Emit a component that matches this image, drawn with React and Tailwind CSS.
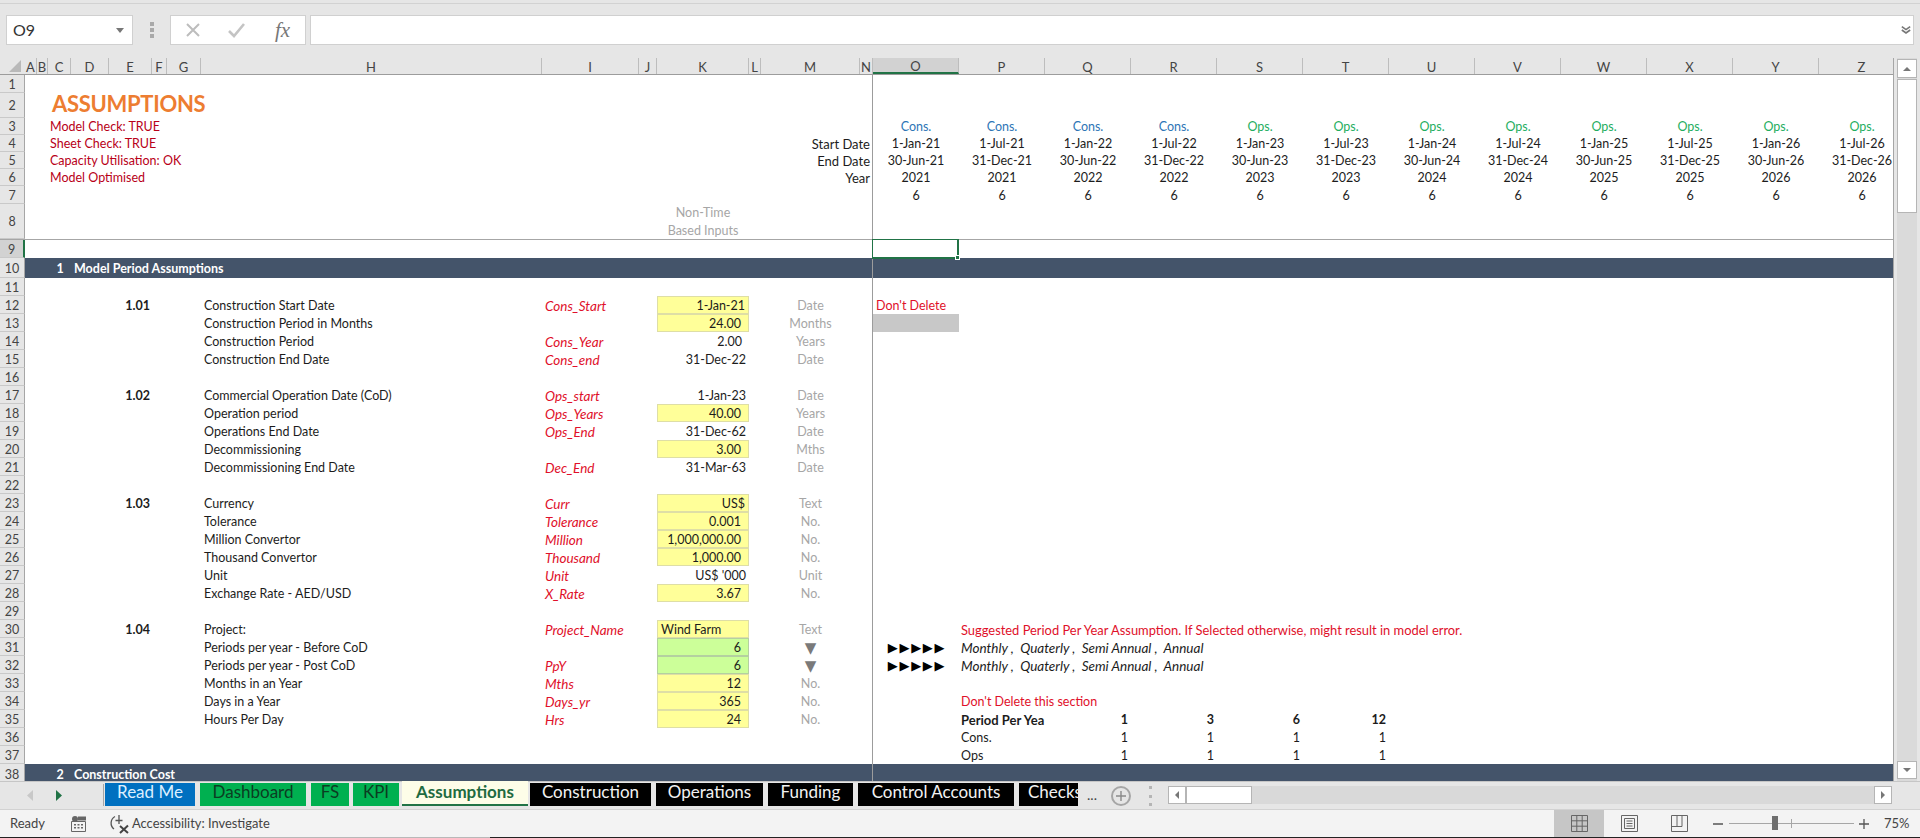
const GRID =
  "grid grid-rows-1 grid-cols-[25px_12px_11px_23px_38px_43px_15px_34px_341px_97px_18px_92px_12px_99px_13px_repeat(12,86px)]";

// column start classes, O is the first column right of the freeze line
const COL = {
  C: "col-start-4",
  D: "col-start-5",
  E: "col-start-6",
  H: "col-start-9",
  I: "col-start-10",
  K: "col-start-12",
  M: "col-start-14",
  N: "col-start-15",
  O: "col-start-16",
  P: "col-start-17",
  Q: "col-start-18",
  R: "col-start-19",
  S: "col-start-20",
  T: "col-start-21",
  U: "col-start-22",
  V: "col-start-23",
  W: "col-start-24",
  X: "col-start-25",
  Y: "col-start-26",
  Z: "col-start-27",
};

const LETTERS = "ABCDEFGHIJKLMNOPQRSTUVWXYZ".split("");

const PERIODS = [
  ["O", "Cons.", "1-Jan-21", "30-Jun-21", "2021"],
  ["P", "Cons.", "1-Jul-21", "31-Dec-21", "2021"],
  ["Q", "Cons.", "1-Jan-22", "30-Jun-22", "2022"],
  ["R", "Cons.", "1-Jul-22", "31-Dec-22", "2022"],
  ["S", "Ops.", "1-Jan-23", "30-Jun-23", "2023"],
  ["T", "Ops.", "1-Jul-23", "31-Dec-23", "2023"],
  ["U", "Ops.", "1-Jan-24", "30-Jun-24", "2024"],
  ["V", "Ops.", "1-Jul-24", "31-Dec-24", "2024"],
  ["W", "Ops.", "1-Jan-25", "30-Jun-25", "2025"],
  ["X", "Ops.", "1-Jul-25", "31-Dec-25", "2025"],
  ["Y", "Ops.", "1-Jan-26", "30-Jun-26", "2026"],
  ["Z", "Ops.", "1-Jul-26", "31-Dec-26", "2026"],
];

const INPUTS = {
  12: { ref: "1.01", label: "Construction Start Date", name: "Cons_Start", value: "1-Jan-21", fill: "y", unit: "Date" },
  13: { label: "Construction Period in Months", value: "24.00", pad: true, fill: "y", unit: "Months" },
  14: { label: "Construction Period", name: "Cons_Year", value: "2.00", pad: true, unit: "Years" },
  15: { label: "Construction End Date", name: "Cons_end", value: "31-Dec-22", unit: "Date" },
  17: { ref: "1.02", label: "Commercial Operation Date (CoD)", name: "Ops_start", value: "1-Jan-23", unit: "Date" },
  18: { label: "Operation period", name: "Ops_Years", value: "40.00", pad: true, fill: "y", unit: "Years" },
  19: { label: "Operations End Date", name: "Ops_End", value: "31-Dec-62", unit: "Date" },
  20: { label: "Decommissioning", value: "3.00", pad: true, fill: "y", unit: "Mths" },
  21: { label: "Decommissioning End Date", name: "Dec_End", value: "31-Mar-63", unit: "Date" },
  23: { ref: "1.03", label: "Currency", name: "Curr", value: "US$", fill: "y", unit: "Text" },
  24: { label: "Tolerance", name: "Tolerance", value: "0.001", pad: true, fill: "y", unit: "No." },
  25: { label: "Million Convertor", name: "Million", value: "1,000,000.00", pad: true, fill: "y", unit: "No." },
  26: { label: "Thousand Convertor", name: "Thousand", value: "1,000.00", pad: true, fill: "y", unit: "No." },
  27: { label: "Unit", name: "Unit", value: "US$ '000", unit: "Unit" },
  28: { label: "Exchange Rate - AED/USD", name: "X_Rate", value: "3.67", pad: true, fill: "y", unit: "No." },
  30: { ref: "1.04", label: "Project:", name: "Project_Name", value: "Wind Farm", left: true, fill: "y", unit: "Text" },
  31: { label: "Periods per year - Before CoD", value: "6", pad: true, fill: "g", unit: "▼" },
  32: { label: "Periods per year - Post CoD", name: "PpY", value: "6", pad: true, fill: "g", unit: "▼" },
  33: { label: "Months in an Year", name: "Mths", value: "12", pad: true, fill: "y", unit: "No." },
  34: { label: "Days in a Year", name: "Days_yr", value: "365", pad: true, fill: "y", unit: "No." },
  35: { label: "Hours Per Day", name: "Hrs", value: "24", pad: true, fill: "y", unit: "No." },
};

const TABS = [
  { name: "Read Me", cls: "w-[90px] mr-[5px] justify-center bg-[#0070c0] text-[#dcefff]" },
  { name: "Dashboard", cls: "w-[106px] mr-[5px] justify-center bg-[#00b050] text-[#0b3d22]" },
  { name: "FS", cls: "w-[38px] mr-[4px] justify-center bg-[#00b050] text-[#0b3d22]" },
  { name: "KPI", cls: "w-[46px] mr-[3px] justify-center bg-[#00b050] text-[#0b3d22]" },
  { name: "Assumptions", cls: "w-[126px] mr-[2px] h-[25px] -mt-[2px] pt-[2px] justify-center bg-[#fdfde8] border-b-2 border-[#217346] text-[#1f6b41] font-bold" },
  { name: "Construction", cls: "w-[121px] mr-[5px] justify-center bg-black text-[#f2f2f2]" },
  { name: "Operations", cls: "w-[107px] mr-[5px] justify-center bg-black text-[#f2f2f2]" },
  { name: "Funding", cls: "w-[85px] mr-[5px] justify-center bg-black text-[#f2f2f2]" },
  { name: "Control Accounts", cls: "w-[156px] mr-[5px] justify-center bg-black text-[#f2f2f2]" },
  { name: "Checks", cls: "w-[59px] pl-[9px] bg-black text-[#f2f2f2] overflow-hidden" },
];

function Cell({ col, className = "", children }) {
  // excel sits text low in the row, so nudge it unless the cell sets its own offset
  const nudge = className.includes("pt-[") ? "" : "pt-[1px]";
  return (
    <div className={`${COL[col]} row-start-1 flex items-center whitespace-pre min-w-0 h-full ${nudge} ${className}`}>
      {children}
    </div>
  );
}

function Row({ n, h = "h-[18px]", selected, className = "", children }) {
  return (
    <div className={`${GRID} ${h} shrink-0 text-[12.5px] leading-[16px] text-[#1c1c1c] ${className}`}>
      <div
        className={`col-start-1 row-start-1 flex items-center justify-center h-full border-b border-b-[#c9c9c9] border-r text-[12.5px] font-normal text-[#444] pt-[2px] ${
          selected ? "bg-[#d2d2d2] border-r-2 border-r-[#217346]" : "bg-[#e6e6e6] border-r-[#a6a6a6]"
        }`}
      >
        {n}
      </div>
      {children}
    </div>
  );
}

function InputRow({ n, extra }) {
  const r = INPUTS[n];
  if (!r) return <Row n={n}>{extra}</Row>;
  const fill =
    r.fill === "y"
      ? "bg-[#ffff99] border border-[#dedea6]"
      : r.fill === "g"
        ? "bg-[#ccff99] border border-[#b4d0a0]"
        : "";
  return (
    <Row n={n}>
      {r.ref && <Cell col="E" className="justify-end pr-[2px] font-bold">{r.ref}</Cell>}
      <Cell col="H" className="pl-[3px]">{r.label}</Cell>
      {r.name && <Cell col="I" className="pl-[3px] italic text-[13.5px] text-[#e0102a]">{r.name}</Cell>}
      <Cell
        col="K"
        className={`${fill} ${r.left ? "pl-[3px]" : r.pad ? "justify-end pr-[7px]" : "justify-end pr-[3px]"}`}
      >
        {r.value}
      </Cell>
      <Cell
        col="M"
        className={`justify-center ${r.unit === "▼" ? "font-[family-name:DejaVu_Sans,sans-serif] text-[#7a7a7a] text-[15px]" : "text-[#a6a6a6]"}`}
      >
        {r.unit}
      </Cell>
      {extra}
    </Row>
  );
}

const SCHEDULE = ["Q", "R", "S", "T"];

const arrows = (
  <Cell col="O" className="justify-center pl-[2px] font-[family-name:DejaVu_Sans,sans-serif] text-[13px] text-black tracking-[1.7px]">▶▶▶▶▶</Cell>
);
const periodHint = (
  <Cell col="P" className="pl-[2px] italic text-[13.5px]">Monthly ,  Quaterly ,  Semi Annual ,  Annual</Cell>
);

const EXTRAS = {
  12: <Cell col="O" className="pl-[3px] text-[#e0102a]">Don't Delete</Cell>,
  13: <Cell col="O" className="bg-[#c8c8c8]" />,
  30: <Cell col="P" className="pl-[2px] text-[12.9px] text-[#e0102a]">Suggested Period Per Year Assumption. If Selected otherwise, might result in model error.</Cell>,
  31: <>{arrows}{periodHint}</>,
  32: <>{arrows}{periodHint}</>,
  34: <Cell col="P" className="pl-[2px] text-[#e0102a]">Don't Delete this section</Cell>,
  35: (
    <>
      <Cell col="P" className="pl-[2px] text-[13px] font-bold overflow-hidden">Period Per Yea</Cell>
      {["1", "3", "6", "12"].map((v, i) => (
        <Cell key={v} col={SCHEDULE[i]} className="justify-end pr-[3px] font-bold">{v}</Cell>
      ))}
    </>
  ),
  36: (
    <>
      <Cell col="P" className="pl-[2px]">Cons.</Cell>
      {SCHEDULE.map((c) => <Cell key={c} col={c} className="justify-end pr-[3px]">1</Cell>)}
    </>
  ),
  37: (
    <>
      <Cell col="P" className="pl-[2px]">Ops</Cell>
      {SCHEDULE.map((c) => <Cell key={c} col={c} className="justify-end pr-[3px]">1</Cell>)}
    </>
  ),
};

function Sheet() {
  const body = [];
  for (let n = 11; n <= 37; n++) body.push(<InputRow key={n} n={n} extra={EXTRAS[n]} />);

  return (
    <div className="relative w-[1894px] h-full overflow-hidden bg-white border-r border-r-[#a6a6a6]">
      {/* column letters */}
      <div className={`${GRID} h-[17px] bg-[#e6e6e6] border-b border-b-[#9c9c9c] text-[13px] leading-[16px] text-[#444]`}>
        <div className="flex items-center justify-end pr-[3px]">
          <svg width="13" height="12" viewBox="0 0 13 12"><path d="M12 0v12H0z" fill="#b9b9b9" /></svg>
        </div>
        {LETTERS.map((c) => (
          <div
            key={c}
            className={`flex items-center justify-center pt-[1px] border-r border-r-[#bdbdbd] ${c === "O" ? "bg-[#d2d2d2] border-b-2 border-b-[#217346]" : ""}`}
          >
            {c}
          </div>
        ))}
      </div>

      <Row n={1} />
      <Row n={2} h="h-[25px]">
        <Cell col="C" className="pl-[4px] pb-[3px] pt-[0px] text-[22px] leading-[22px] font-bold text-[#ed7d31] tracking-[-0.3px]">ASSUMPTIONS</Cell>
      </Row>
      {[
        [3, "Model Check: TRUE", "h-[17px]"],
        [4, "Sheet Check: TRUE", "h-[17px]", "Start Date", 2],
        [5, "Capacity Utilisation: OK", "h-[17px]", "End Date", 3],
        [6, "Model Optimised", "h-[17px]", "Year", 4],
      ].map(([n, text, h, side, idx]) => (
        <Row key={n} n={n} h={h}>
          <Cell col="C" className="pl-[2px] text-[#b80018]">{text}</Cell>
          {side && <Cell col="N" className="justify-end pr-[3px] text-[13px]">{side}</Cell>}
          {PERIODS.map((p) => (
            <Cell
              key={p[0]}
              col={p[0]}
              className={`justify-center ${n === 3 ? (p[1] === "Cons." ? "text-[#2e75b6]" : "text-[#1fae5f]") : ""}`}
            >
              {n === 3 ? p[1] : p[idx]}
            </Cell>
          ))}
        </Row>
      ))}
      <Row n={7}>
        {PERIODS.map((p) => <Cell key={p[0]} col={p[0]} className="justify-center">6</Cell>)}
      </Row>
      <Row n={8} h="h-[36px]" className="border-b border-b-[#a6a6a6]">
        <Cell col="K" className="flex-col justify-center leading-[18px] text-[#a6a6a6]">
          <span>Non-Time</span>
          <span>Based Inputs</span>
        </Cell>
      </Row>
      <Row n={9} selected />
      <Row n={10} h="h-[20px]" className="bg-[#44546a] text-white font-bold">
        <Cell col="C" className="justify-center pl-[1px] pt-[2px]">1</Cell>
        <Cell col="D" className="pl-[3px] pt-[2px]">Model Period Assumptions</Cell>
      </Row>
      {body}
      <Row n={38} h="h-[20px]" className="bg-[#44546a] text-white font-bold">
        <Cell col="C" className="justify-center pl-[1px] pt-[2px]">2</Cell>
        <Cell col="D" className="pl-[3px] pt-[2px]">Construction Cost</Cell>
      </Row>

      {/* frozen pane divider and active cell outline */}
      <div className="absolute left-[872px] top-[17px] bottom-0 w-px bg-[#9c9c9c]" />
      <div className="absolute left-[872px] top-[181px] w-[87px] h-[20px] border border-[#217346] border-r-2 border-b-2">
        <div className="absolute -right-[3px] -bottom-[3px] w-[5px] h-[5px] bg-[#217346] border border-white" />
      </div>
    </div>
  );
}

function ScrollBtn({ d, className = "" }) {
  return (
    <div className={`flex items-center justify-center shrink-0 bg-white border border-[#b5b5b5] ${className}`}>
      <svg width="10" height="10" viewBox="0 0 10 10"><path d={d} fill="#777" /></svg>
    </div>
  );
}

function StatusIcons() {
  return (
    <>
      <div className="flex items-center justify-center w-[50px] h-full bg-[#c6c6c6]">
        <svg width="17" height="17" viewBox="0 0 17 17" fill="none" stroke="#666">
          <path d="M.5.5h16v16H.5zM.5 5.800h16M.5 11.200h16M5.800.5v16M11.200.5v16" />
        </svg>
      </div>
      <div className="flex items-center justify-center w-[50px] h-full">
        <svg width="17" height="17" viewBox="0 0 17 17" fill="none" stroke="#666">
          <path d="M.5.5h16v16H.5zM3.500 3.500h10v10h-10zM5.500 6h6M5.500 8.500h6M5.500 11h6" />
        </svg>
      </div>
      <div className="flex items-center justify-center w-[50px] h-full">
        <svg width="17" height="17" viewBox="0 0 17 17" fill="none" stroke="#666">
          <path d="M.5.5h16v16H.5zM.5 11.500h10.500V.5M6 .5v11" />
        </svg>
      </div>
    </>
  );
}

export default function App() {
  return (
    <div className="w-[1920px] h-[838px] flex flex-col overflow-hidden bg-[#e6e6e6] font-[family-name:Lato,sans-serif]">
      {/* formula bar */}
      <div className="h-[58px] shrink-0 pt-[3px]">
        <div className="border-t border-t-[#d2d2d2] flex items-start pt-[11px] pl-[6px] pr-[6px] h-full">
          <div className="w-[127px] h-[30px] bg-white border border-[#d0d0d0] flex items-center justify-between pl-[6px] pr-[8px] text-[16px] text-[#333]">
            <span>O9</span>
            <svg width="8" height="5" viewBox="0 0 8 5"><path d="M0 0h8L4 5z" fill="#777" /></svg>
          </div>
          <div className="w-[37px] h-[30px] flex flex-col items-center justify-center gap-[2px]">
            <span className="w-[4px] h-[4px] bg-[#a9a9a9]" />
            <span className="w-[4px] h-[4px] bg-[#a9a9a9]" />
            <span className="w-[4px] h-[4px] bg-[#a9a9a9]" />
          </div>
          <div className="w-[136px] h-[30px] bg-white border border-[#d0d0d0] flex items-center pl-[14px] mr-[4px]">
            <svg width="16" height="16" viewBox="0 0 16 16" fill="none" stroke="#bdbdbd" strokeWidth="2">
              <path d="M2 2l12 12M14 2L2 14" />
            </svg>
            <svg className="ml-[27px]" width="17" height="15" viewBox="0 0 17 15" fill="none" stroke="#c4c4c4" strokeWidth="2.600">
              <path d="M1 8l5 5L16 1" />
            </svg>
            <span className="ml-[30px] font-[family-name:Liberation_Serif,serif] italic text-[21px] leading-none text-[#777]">fx</span>
          </div>
          <div className="flex-1 h-[30px] bg-white border border-[#d0d0d0] flex items-center justify-end pr-[2px]">
            <svg width="10" height="10" viewBox="0 0 12 10" fill="none" stroke="#777" strokeWidth="2">
              <path d="M1 1l5 3.500L11 1M1 5l5 3.500L11 5" />
            </svg>
          </div>
        </div>
      </div>

      {/* sheet and vertical scrollbar */}
      <div className="h-[723px] shrink-0 flex">
        <Sheet />
        <div className="ml-[3px] w-[20px] flex flex-col pt-[1px] bg-[#dadada]">
          <ScrollBtn d="M5 3l4 4H1z" className="h-[19px]" />
          <div className="h-[134px] mt-[1px] shrink-0 bg-white border border-[#b5b5b5]" />
          <div className="flex-1" />
          <ScrollBtn d="M5 7L1 3h8z" className="h-[18px] mb-[2px]" />
        </div>
      </div>

      {/* sheet tabs */}
      <div className="h-[28px] shrink-0 flex items-start bg-[#e6e6e6] border-t border-t-[#c6c6c6] pt-[1px]">
        <div className="w-[105px] h-[24px] shrink-0 flex items-center">
          <svg className="ml-[27px]" width="7" height="11" viewBox="0 0 7 11"><path d="M6 0v11L0 5.500z" fill="#c8c8c8" /></svg>
          <svg className="ml-[21px]" width="7" height="11" viewBox="0 0 7 11"><path d="M1 0v11l6-5.500z" fill="#217346" /></svg>
          <span className="ml-[41px] w-px h-[22px] bg-[#a6a6a6]" />
        </div>
        <div className="flex items-start w-[973px] shrink-0">
          {TABS.map((t) => (
            <div key={t.name} className={`h-[23px] shrink-0 flex items-start whitespace-nowrap text-[17px] leading-[18px] ${t.cls}`}>
              {t.name}
            </div>
          ))}
        </div>
        <div className="w-[26px] h-[22px] pl-[2px] flex items-center justify-center text-[14px] text-[#444]">...</div>
        <div className="ml-[7px] w-[20px] h-[20px] mt-[3px] rounded-full border-2 border-[#a6a6a6] flex items-center justify-center">
          <svg width="12" height="12" viewBox="0 0 12 12" stroke="#8a8a8a" strokeWidth="1.400"><path d="M6 1v10M1 6h10" /></svg>
        </div>
        <div className="ml-[18px] w-[3px] h-[20px] mt-[3px] flex flex-col justify-between">
          <span className="h-[3px] bg-[#b5b5b5]" />
          <span className="h-[3px] bg-[#b5b5b5]" />
          <span className="h-[3px] bg-[#b5b5b5]" />
        </div>
        <div className="ml-[16px] w-[724px] h-[18px] mt-[3px] flex bg-[#d9d9d9]">
          <ScrollBtn d="M3 5l4-4v8z" className="w-[18px]" />
          <div className="w-[66px] bg-white border border-[#b5b5b5]" />
          <div className="flex-1" />
          <ScrollBtn d="M7 5L3 1v8z" className="w-[18px]" />
        </div>
      </div>

      {/* status bar */}
      <div className="h-[28px] shrink-0 flex items-center bg-[#f3f3f3] border-t border-t-[#d2d2d2] text-[13px] text-[#444]">
        <span className="ml-[10px] w-[61px]">Ready</span>
        <svg width="15" height="16" viewBox="0 0 15 16">
          <circle cx="4" cy="3" r="3" fill="#666" />
          <path d="M7 .5h8v4H7z" fill="#666" />
          <path d="M.5 5.500h14v10H.5z" fill="none" stroke="#666" />
          <path d="M3 8h2v1.500H3zM6.500 8h2v1.500h-2zM10 8h2v1.500h-2zM3 11h2v1.500H3zM6.500 11h2v1.500h-2zM10 11h2v1.500h-2z" fill="#666" />
        </svg>
        <svg className="ml-[24px]" width="20" height="20" viewBox="0 0 20 20" fill="none" stroke="#555" strokeWidth="1.300">
          <path d="M5 2.500A7.500 7.500 0 0 0 4 15" />
          <path d="M9 1v9M5.500 6.500h7" />
          <path d="M10 12l8 7M18 11.500L10 19" stroke="#444" strokeWidth="2" />
        </svg>
        <span className="ml-[2px] text-[12.9px]">Accessibility: Investigate</span>
        <div className="flex-1" />
        <div className="flex items-center h-full mr-[1px]">
          <StatusIcons />
          <svg className="ml-[9px]" width="10" height="10" viewBox="0 0 10 10" stroke="#555" strokeWidth="1.500"><path d="M0 5h10" /></svg>
          <div className="relative ml-[6px] w-[125px] h-px bg-[#a6a6a6]">
            <span className="absolute left-[62px] -top-[4px] w-px h-[9px] bg-[#a6a6a6]" />
            <span className="absolute left-[43px] -top-[7px] w-[6px] h-[14px] bg-[#6e6e6e]" />
          </div>
          <svg className="ml-[5px]" width="10" height="10" viewBox="0 0 10 10" stroke="#555" strokeWidth="1.300"><path d="M0 5h10M5 0v10" /></svg>
          <span className="ml-[15px] w-[35px]">75%</span>
        </div>
      </div>
      <div className="h-px shrink-0 flex">
        <div className="w-[60px] bg-[#222]" />
        <div className="w-[430px] bg-[#b8b8b8]" />
        <div className="flex-1 bg-[#222]" />
      </div>
    </div>
  );
}
